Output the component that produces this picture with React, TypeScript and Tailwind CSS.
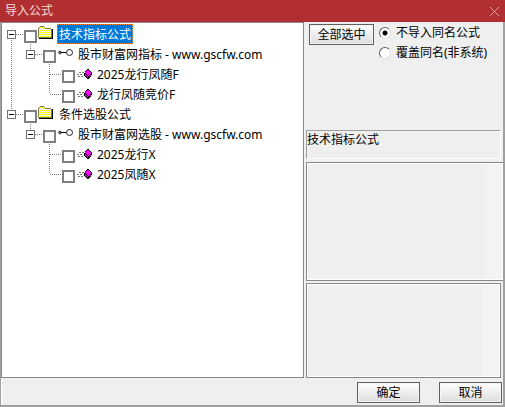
import { useState } from "react"

type IconKind = "folder" | "key" | "formula"
type Guide = "none" | "line" | "tee" | "end"

interface TreeNode {
  id: string;
  label: string;
  icon: IconKind;
  children?: TreeNode[];
}

const tree: TreeNode[] = [
  {
    id: "tech", label: "技术指标公式", icon: "folder", children: [
      {
        id: "tech-site", label: "股市财富网指标 - www.gscfw.com", icon: "key", children: [
          { id: "tech-1", label: "2025龙行凤随F", icon: "formula" },
          { id: "tech-2", label: "龙行凤随竞价F", icon: "formula" },
        ],
      },
    ],
  },
  {
    id: "pick", label: "条件选股公式", icon: "folder", children: [
      {
        id: "pick-site", label: "股市财富网选股 - www.gscfw.com", icon: "key", children: [
          { id: "pick-1", label: "2025龙行X", icon: "formula" },
          { id: "pick-2", label: "2025凤随X", icon: "formula" },
        ],
      },
    ],
  },
]

const FolderIcon = () => (
  <svg width="16" height="16" viewBox="0 0 16 16" shapeRendering="crispEdges" className="shrink-0">
    <path d="M14 5h1v10H1v-1h13z" fill="#000" />
    <path d="M0 4h1V3h1V2h4v1h1v1h6v1h1v9H0z" fill="#ffff00" />
    <path d="M2 4.5h4M1 6.5h12M1 8.5h12M1 10.5h12M1 12.5h12" stroke="#fff" strokeDasharray="1 1" />
    <path d="M2 5.5h11M2 7.5h11M2 9.5h11M2 11.5h11" stroke="#fff" strokeDasharray="1 1" />
    <path d="M2 2h4v1H2zM1 3h1v1H1zM6 3h1v1H6zM7 4h6v1H7zM0 4h1v9H0zM13 5h1v9h-1zM0 13h14v1H0z" fill="#808040" />
  </svg>
)

const KeyIcon = () => (
  <svg width="16" height="16" viewBox="0 0 16 16" className="shrink-0">
    <circle cx="3" cy="8.5" r="1.4" fill="#777" stroke="#222" strokeWidth=".8" />
    <path d="M4 8.5h6" stroke="#000" />
    <circle cx="12.5" cy="8.5" r="3" fill="#fff" stroke="#222" />
  </svg>
)

const FormulaIcon = () => (
  <svg width="16" height="16" viewBox="0 0 16 16" shapeRendering="crispEdges" className="shrink-0">
    <path d="M3 8.5h5M1 10.5h6M2 12.5h6" stroke="#777" strokeDasharray="2 1" />
    <path d="M11 5h2v1h1v1h1v1h1v3h-1v2h-1v1h-1v1h-2v-1h-1v-1H9v-1H8V9h1V7h1V6h1z" fill="#000" />
    <path d="M11 6h2v1h1v1h1v2h-1v1h-1v1h-1v-1h-1v-1h-1V9H9V8h1V7h1z" fill="#ff00ff" />
    <path d="M9 10h1v1h1v1h1v2h-1v-1h-1v-1H9zM13 12h1v-1h1v1h-1v1h-1z" fill="#c000c0" />
  </svg>
)

const icons = { folder: FolderIcon, key: KeyIcon, formula: FormulaIcon }

const guidePaths = {
  none: "",
  line: "M9.5 0v20",
  tee: "M9.5 0v20M9.5 10.5h11",
  end: "M9.5 0v10M9.5 10.5h11",
}

const GuideCell = ({ kind }: { kind: Guide }) => (
  <svg width="19" height="20" viewBox="0 0 19 20" shapeRendering="crispEdges" className="shrink-0 overflow-visible [grid-area:1/1]">
    <path d={guidePaths[kind]} stroke="#808080" strokeDasharray="1 1" fill="none" />
  </svg>
)

interface BranchProps {
  nodes: TreeNode[];
  guides: Guide[];
  selected: string;
  onSelect: (node: TreeNode) => void;
  checked: string[];
  onCheck: (id: string) => void;
}

function Branch({ nodes, guides, ...rest }: BranchProps) {
  const [closed, setClosed] = useState<string[]>([])
  const { selected, onSelect, checked, onCheck } = rest

  const toggle = (id: string) =>
    setClosed(closed.includes(id) ? closed.filter((c) => c !== id) : [...closed, id])

  return (
    <ul>
      {nodes.map((node, i) => {
        const last = i === nodes.length - 1
        const root = guides.length === 0
        const open = !closed.includes(node.id)
        const Icon = icons[node.icon]
        return (
          <li key={node.id}>
            <div className="flex h-5">
              {guides.map((g, n) => <GuideCell key={n} kind={g} />)}
              <div className="grid shrink-0">
                {root && i === 0 ? (
                  <svg width="19" height="20" viewBox="0 0 19 20" shapeRendering="crispEdges" className="overflow-visible [grid-area:1/1]">
                    <path d="M9.5 10v10M9.5 10.5h11" stroke="#808080" strokeDasharray="1 1" />
                  </svg>
                ) : <GuideCell kind={last ? "end" : "tee"} />}
                {node.children && (
                  <button
                    aria-label={node.label}
                    aria-expanded={open}
                    onClick={() => toggle(node.id)}
                    className="z-10 mt-1.5 ml-[5px] grid size-[9px] place-items-center border border-[#707070] bg-white [grid-area:1/1]"
                  >
                    <span className="h-px w-[5px] bg-black" />
                  </button>
                )}
              </div>
              <input
                type="checkbox"
                id={node.id}
                aria-label={node.label}
                checked={checked.includes(node.id)}
                onChange={() => onCheck(node.id)}
                className="z-10 mt-1.5 mr-px ml-[3px] size-[13px] shrink-0 appearance-none border-2 border-[#808080] bg-white checked:bg-[#404040]"
              />
              <Icon />
              <button
                onClick={() => onSelect(node)}
                className={
                  selected === node.id
                    ? "ml-[3px] border border-dotted border-[#ff8728] bg-[#0078d7] px-px pt-0.5 leading-4 whitespace-nowrap text-white"
                    : "ml-[3px] border border-transparent px-px pt-0.5 leading-4 whitespace-nowrap"
                }
              >
                {node.label}
              </button>
            </div>
            {node.children && open && (
              <Branch nodes={node.children} guides={[...guides, last ? "none" : "line"]} {...rest} />
            )}
          </li>
        )
      })}
    </ul>
  )
}

const buttonClass = "h-[21px] border border-[#606060] bg-linear-to-b from-white to-[#dcdcdc] leading-[18px] text-black outline-1 -outline-offset-2 outline-[#f4f4f4]"
const radioClass = "size-3 appearance-none rounded-full border border-t-[#606060] border-r-[#e0e0e0] border-b-[#e0e0e0] border-l-[#606060] bg-white checked:bg-[radial-gradient(circle,#000_2px,#fff_3px)]"

function App() {
  const [selected, setSelected] = useState(tree[0])
  const [checked, setChecked] = useState<string[]>([])
  const [mode, setMode] = useState("skip")

  const check = (id: string) =>
    setChecked(checked.includes(id) ? checked.filter((c) => c !== id) : [...checked, id])

  const collect = (nodes: TreeNode[]): string[] =>
    nodes.flatMap((n) => [n.id, ...collect(n.children ?? [])])

  return (
    <div className="flex min-h-screen flex-col bg-[#a0a0a0] font-['Noto_Sans','Noto_Sans_CJK_SC',sans-serif] text-xs text-black">
      <header className="flex h-[22px] items-center justify-between bg-[#b22f31] px-[5px] text-[#f0dcdc]">
        <h1>导入公式</h1>
        <button aria-label="关闭">
          <svg width="11" height="11" viewBox="0 0 11 11">
            <path d="M1 1l9 9M10 1l-9 9" stroke="#e0a4a5" strokeWidth="1" />
          </svg>
        </button>
      </header>

      <main className="mr-0.5 mb-0.5 ml-px flex grow flex-col bg-[#efefef]">
        <div className="flex grow">
          <section className="min-w-0 grow border border-[#888] bg-white pt-px">
            <Branch
              nodes={tree}
              guides={[]}
              selected={selected.id}
              onSelect={setSelected}
              checked={checked}
              onCheck={check}
            />
          </section>

          <section className="flex w-[199px] shrink-0 flex-col pl-0.5">
            <div className="flex h-[108px] items-start pl-[3px]">
              <button className={`mt-0.5 w-[65px] ${buttonClass}`} onClick={() => setChecked(collect(tree))}>全部选中</button>
              <div className="ml-[5px] flex flex-col pt-px">
                <label className="flex h-5 items-center gap-[5px] whitespace-nowrap">
                  <input type="radio" name="mode" className={radioClass} checked={mode === "skip"} onChange={() => setMode("skip")} />
                  不导入同名公式
                </label>
                <label className="flex h-5 items-center gap-[5px] whitespace-nowrap">
                  <input type="radio" name="mode" className={radioClass} checked={mode === "cover"} onChange={() => setMode("cover")} />
                  覆盖同名(非系统)
                </label>
              </div>
            </div>

            <p className="mr-0.5 h-[29px] border border-t-[#a0a0a0] border-r-white border-b-white border-l-[#a0a0a0] leading-[18px]">
              {selected.label}
            </p>

            <div className="mt-[3px] flex grow-[119] basis-0 border border-r-0 border-[#888]">
              <div className="flex grow border border-white">
                <textarea readOnly aria-label="公式说明" className="min-w-0 grow resize-none bg-[#efefef] outline-none" />
                <div className="w-[17px] bg-[#f5f3f1]" />
              </div>
            </div>

            <div className="mt-0.5 mr-0.5 flex grow-[95] basis-0 border border-[#888]">
              <div className="flex grow border border-white">
                <textarea readOnly aria-label="公式参数" className="min-w-0 grow resize-none bg-[#efefef] outline-none" />
                <div className="w-[17px] bg-[#f5f3f1]" />
              </div>
            </div>
          </section>
        </div>

        <footer className="flex h-[27px] justify-end gap-[19px] border-l border-white pt-1 pr-px">
          <button className={`w-[63px] ${buttonClass}`}>确定</button>
          <button className={`w-[63px] ${buttonClass}`}>取消</button>
        </footer>
      </main>
    </div>
  )
}

export default App
